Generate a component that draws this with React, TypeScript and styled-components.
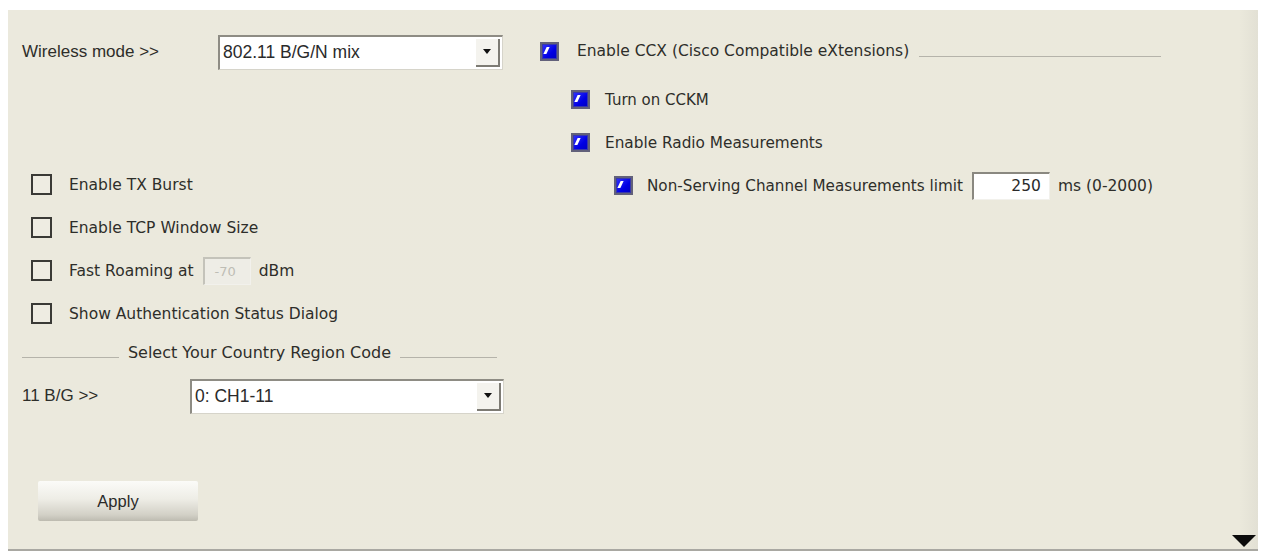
import styled, { createGlobalStyle } from 'styled-components';

const GlobalStyle = createGlobalStyle`
  html, body {
    margin: 0;
    padding: 0;
    background: #ffffff;
  }
  body {
    font-family: 'DejaVu Sans', 'Liberation Sans', sans-serif;
    color: #2e2e2a;
  }
`;

const Panel = styled.div`
  position: relative;
  box-sizing: border-box;
  margin: 10px 10px 0 8px;
  height: 541px;
  background: linear-gradient(to right, #ebe9dd 0%, #ebe9dc 98.5%, #e2e0d4 100%);
  border-bottom: 2px solid #a9a8a2;
  display: flex;
  font-size: 15.5px;
`;

const LeftColumn = styled.div`
  box-sizing: border-box;
  width: 496px;
  padding: 24px 0 0 14px;
  display: flex;
  flex-direction: column;
`;

const RightColumn = styled.div`
  flex: 1;
  padding: 20px 0 0 36px;
  display: flex;
  flex-direction: column;
`;

const Row = styled.div<{ h?: number; mt?: number; indent?: number }>`
  display: flex;
  align-items: center;
  height: ${(p) => p.h ?? 43}px;
  margin-top: ${(p) => p.mt ?? 0}px;
  padding-left: ${(p) => p.indent ?? 0}px;
`;

const Label = styled.span<{ w?: number; size?: number }>`
  white-space: nowrap;
  ${(p) => (p.w ? `width: ${p.w}px;` : '')}
  ${(p) => (p.size ? `font-size: ${p.size}px;` : '')}
`;

const PlainLabel = styled(Label)`
  font-family: 'Liberation Sans', sans-serif;
  font-size: 17px;
`;

const Select = styled.div<{ w: number }>`
  box-sizing: border-box;
  width: ${(p) => p.w}px;
  height: 35px;
  display: flex;
  align-items: stretch;
  background: #ffffff;
  border-top: 2px solid #8e8c84;
  border-left: 2px solid #8e8c84;
  border-right: 1px solid #d6d4ca;
  border-bottom: 1px solid #d6d4ca;
`;

const SelectValue = styled.span`
  flex: 1;
  display: flex;
  align-items: center;
  padding-left: 3px;
  font-family: 'Liberation Sans', sans-serif;
  font-size: 17.5px;
  color: #2a2a2a;
`;

const SelectArrow = styled.span`
  width: 22px;
  margin: 2px;
  display: flex;
  align-items: center;
  justify-content: center;
  background: #f4f3ee;
  border-right: 2px solid #7d7b74;
  border-bottom: 2px solid #7d7b74;
  &::after {
    content: '';
    border-left: 4px solid transparent;
    border-right: 4px solid transparent;
    border-top: 5px solid #111;
  }
`;

const Box = styled.span`
  box-sizing: border-box;
  width: 21px;
  height: 21px;
  margin: 0 17px 0 9px;
  border: 2px solid #3a3a36;
  background: #eeece2;
  flex-shrink: 0;
`;

const BlueBox = styled.span<{ gap?: number }>`
  position: relative;
  box-sizing: border-box;
  width: 19px;
  height: 19px;
  margin-right: ${(p) => p.gap ?? 15}px;
  flex-shrink: 0;
  border: 2px solid #62617a;
  background: linear-gradient(135deg, #3434ff 0%, #0000e4 60%, #0000c0 100%);
  box-shadow: inset 0 0 0 1px #3838ac;
  &::after {
    content: '';
    position: absolute;
    left: 3px;
    top: 3px;
    width: 3px;
    height: 7px;
    background: #ffffff;
    transform: skewX(-25deg);
  }
`;

const SmallInput = styled.span<{ w: number; disabled?: boolean }>`
  box-sizing: border-box;
  display: inline-flex;
  align-items: center;
  justify-content: flex-end;
  width: ${(p) => p.w}px;
  height: 28px;
  margin: 0 8px 0 9px;
  padding-right: ${(p) => (p.disabled ? 14 : 8)}px;
  background: ${(p) => (p.disabled ? '#eeede6' : '#ffffff')};
  color: ${(p) => (p.disabled ? '#bebdb5' : '#2a2a2a')};
  font-size: ${(p) => (p.disabled ? 13 : 15.5)}px;
  border-top: 2px solid ${(p) => (p.disabled ? '#c4c3ba' : '#8a8880')};
  border-left: 2px solid ${(p) => (p.disabled ? '#c4c3ba' : '#8a8880')};
  border-right: 1px solid #f2f1ec;
  border-bottom: 1px solid #f2f1ec;
`;

const Divider = styled.div`
  display: flex;
  align-items: center;
  gap: 9px;
  height: 30px;
  margin-top: 2px;
  width: 475px;
  font-size: 16px;
  &::before,
  &::after {
    content: '';
    flex: 1;
    height: 1px;
    margin-top: 10px;
    background: #b5b3aa;
  }
`;

const HeadLine = styled.span`
  width: 242px;
  height: 1px;
  margin: 10px 0 0 10px;
  background: #b5b3aa;
`;

const ApplyButton = styled.button`
  width: 160px;
  height: 40px;
  margin: 67px 0 0 16px;
  border: none;
  border-radius: 2px;
  background: linear-gradient(to bottom, #fbfbf8 0%, #eeede6 45%, #d2d0c6 85%, #bdbbb0 100%);
  font-family: 'Liberation Sans', sans-serif;
  font-size: 16.5px;
  color: #2a2a2a;
  padding: 0;
`;

const CornerArrow = styled.span`
  position: absolute;
  right: 2px;
  bottom: 2px;
  width: 0;
  height: 0;
  border-left: 12px solid transparent;
  border-right: 12px solid transparent;
  border-top: 12px solid #0c0c0c;
`;

export default function App() {
  return (
    <>
      <GlobalStyle />
      <Panel>
        <LeftColumn>
          <Row h={36}>
            <PlainLabel w={196}>Wireless mode &gt;&gt;</PlainLabel>
            <Select w={285}>
              <SelectValue>802.11 B/G/N mix</SelectValue>
              <SelectArrow />
            </Select>
          </Row>

          <Row mt={93}>
            <Box />
            <Label>Enable TX Burst</Label>
          </Row>
          <Row>
            <Box />
            <Label>Enable TCP Window Size</Label>
          </Row>
          <Row>
            <Box />
            <Label>Fast Roaming at</Label>
            <SmallInput w={48} disabled>
              -70
            </SmallInput>
            <Label>dBm</Label>
          </Row>
          <Row>
            <Box />
            <Label>Show Authentication Status Dialog</Label>
          </Row>

          <Divider>Select Your Country Region Code</Divider>

          <Row h={36} mt={11}>
            <PlainLabel w={168}>11 B/G &gt;&gt;</PlainLabel>
            <Select w={314}>
              <SelectValue>0: CH1-11</SelectValue>
              <SelectArrow />
            </Select>
          </Row>

          <ApplyButton>Apply</ApplyButton>
        </LeftColumn>

        <RightColumn>
          <Row h={42}>
            <BlueBox gap={18} />
            <Label>Enable CCX (Cisco Compatible eXtensions)</Label>
            <HeadLine />
          </Row>
          <Row mt={6} indent={31}>
            <BlueBox />
            <Label size={15}>Turn on CCKM</Label>
          </Row>
          <Row indent={31}>
            <BlueBox />
            <Label size={15.3}>Enable Radio Measurements</Label>
          </Row>
          <Row indent={74}>
            <BlueBox gap={14} />
            <Label size={15.2}>Non-Serving Channel Measurements limit</Label>
            <SmallInput w={78}>250</SmallInput>
            <Label>ms (0-2000)</Label>
          </Row>
        </RightColumn>

        <CornerArrow />
      </Panel>
    </>
  );
}
